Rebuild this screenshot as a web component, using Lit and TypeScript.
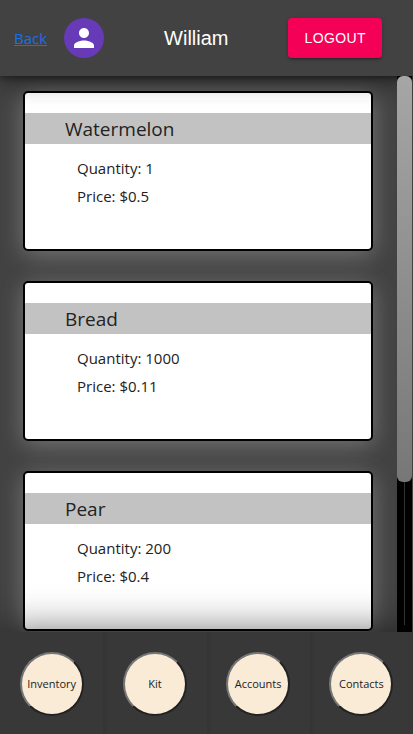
import { LitElement, html, css } from "lit";
import { customElement, property, state } from "lit/decorators.js";

interface Item {
  name: string;
  quantity: number;
  price: number;
}

@customElement("item-card")
export class ItemCard extends LitElement {
  @property({ attribute: false }) item!: Item;

  static styles = css`
    :host {
      display: block;
    }
    .card {
      box-sizing: border-box;
      min-height: 160px;
      padding: 20px 0;
      border: 2px solid #000;
      border-radius: 5px;
      background: #fff;
      color: #222;
      box-shadow: 0 4px 24px rgba(255, 255, 255, 0.28);
    }
    .name {
      margin: 0;
      padding: 1px 40px 0;
      background: #c2c2c2;
      font-size: 19px;
      line-height: 30px;
      font-weight: 400;
    }
    .details {
      margin: 0;
      padding: 10px 52px;
      list-style: none;
      font-size: 15px;
      line-height: 28px;
      font-weight: 400;
    }
  `;

  render() {
    return html`
      <article class="card">
        <h2 class="name">${this.item.name}</h2>
        <ul class="details">
          <li>Quantity: ${this.item.quantity}</li>
          <li>Price: $${this.item.price}</li>
        </ul>
      </article>
    `;
  }
}

@customElement("app-root")
export class AppRoot extends LitElement {
  @state() private items: Item[] = [
    { name: "Watermelon", quantity: 1, price: 0.5 },
    { name: "Bread", quantity: 1000, price: 0.11 },
    { name: "Pear", quantity: 200, price: 0.4 },
  ];

  private sections = ["Inventory", "Kit", "Accounts", "Contacts"];

  static styles = css`
    :host {
      display: flex;
      flex-direction: column;
      height: 100vh;
      overflow: hidden;
      background: #424242;
      font-family: "Open Sans", "Noto Sans", sans-serif;
    }
    .bar {
      display: flex;
      align-items: center;
      position: relative;
      z-index: 1;
      flex: none;
      padding: 18px 31px 18px 14px;
      background: #424242;
      box-shadow: 0 2px 4px -1px rgba(0, 0, 0, 0.2), 0 4px 5px rgba(0, 0, 0, 0.14),
        0 1px 28px rgba(0, 0, 0, 0.6);
    }
    .back {
      margin-right: 17px;
      color: #1a6fe8;
      font-size: 15px;
      line-height: 24px;
    }
    .avatar {
      display: flex;
      align-items: center;
      justify-content: center;
      width: 40px;
      height: 40px;
      border-radius: 50%;
      background: #673ab7;
    }
    .avatar svg {
      width: 30px;
      height: 30px;
      fill: #fff;
    }
    .user {
      flex: 1;
      margin: 0;
      text-align: center;
      color: #fff;
      font: 500 20px/32px "Liberation Sans", Arial, sans-serif;
    }
    .logout {
      height: 40px;
      padding: 0 16px;
      border: 0;
      border-radius: 4px;
      background: #f50057;
      color: #fff;
      font: 500 14px/24px "Liberation Sans", Arial, sans-serif;
      letter-spacing: 0.4px;
      text-transform: uppercase;
      box-shadow: 0 3px 1px -2px rgba(0, 0, 0, 0.2), 0 2px 2px rgba(0, 0, 0, 0.14),
        0 1px 5px rgba(0, 0, 0, 0.12);
    }
    .content {
      display: flex;
      flex: 1;
      min-height: 0;
      padding-right: 1px;
    }
    .list {
      display: flex;
      flex-direction: column;
      flex: 1;
      gap: 30px;
      padding: 15px 24px 0 23px;
      overflow: hidden;
    }
    .scrollbar {
      display: flex;
      flex-direction: column;
      align-items: center;
      position: relative;
      z-index: 2;
      flex: none;
      width: 15px;
      background: #000;
    }
    .thumb {
      width: 15px;
      height: 73%;
      border-radius: 6px;
      background: linear-gradient(#a6a6a6, #777);
    }
    .groove {
      flex: 1;
      width: 1px;
      margin-bottom: 7px;
      background: #333;
    }
    .nav {
      display: grid;
      grid-template-columns: repeat(4, 1fr);
      flex: none;
      background: #383838;
      box-shadow: 0 0 40px rgba(0, 0, 0, 0.6);
    }
    .cell {
      display: flex;
      justify-content: center;
      padding: 20px 0 18px;
    }
    .cell + .cell {
      background: linear-gradient(90deg, #343434, #383838 6px);
    }
    .round {
      width: 64px;
      height: 64px;
      padding: 0;
      border: 2px solid;
      border-color: #767676 #222 #222 #767676;
      border-radius: 50%;
      background: #faebd7;
      color: #222;
      font: 400 11px/16px "Open Sans", "Noto Sans", sans-serif;
    }
  `;

  render() {
    return html`
      <header class="bar">
        <a class="back" href="#">Back</a>
        <span class="avatar">
          <svg viewBox="0 0 24 24" aria-hidden="true">
            <path
              d="M12 12c2.210 0 4-1.790 4-4s-1.790-4-4-4-4 1.790-4 4 1.790 4 4 4zm0 2c-2.670 0-8 1.340-8 4v2h16v-2c0-2.660-5.330-4-8-4z"
            />
          </svg>
        </span>
        <h1 class="user">William</h1>
        <button class="logout" type="button">Logout</button>
      </header>
      <main class="content">
        <div class="list">
          ${this.items.map((item) => html`<item-card .item=${item}></item-card>`)}
        </div>
        <div class="scrollbar" aria-hidden="true">
          <div class="thumb"></div>
          <div class="groove"></div>
        </div>
      </main>
      <nav class="nav">
        ${this.sections.map(
          (name) => html`<div class="cell"><button class="round" type="button">${name}</button></div>`
        )}
      </nav>
    `;
  }
}
